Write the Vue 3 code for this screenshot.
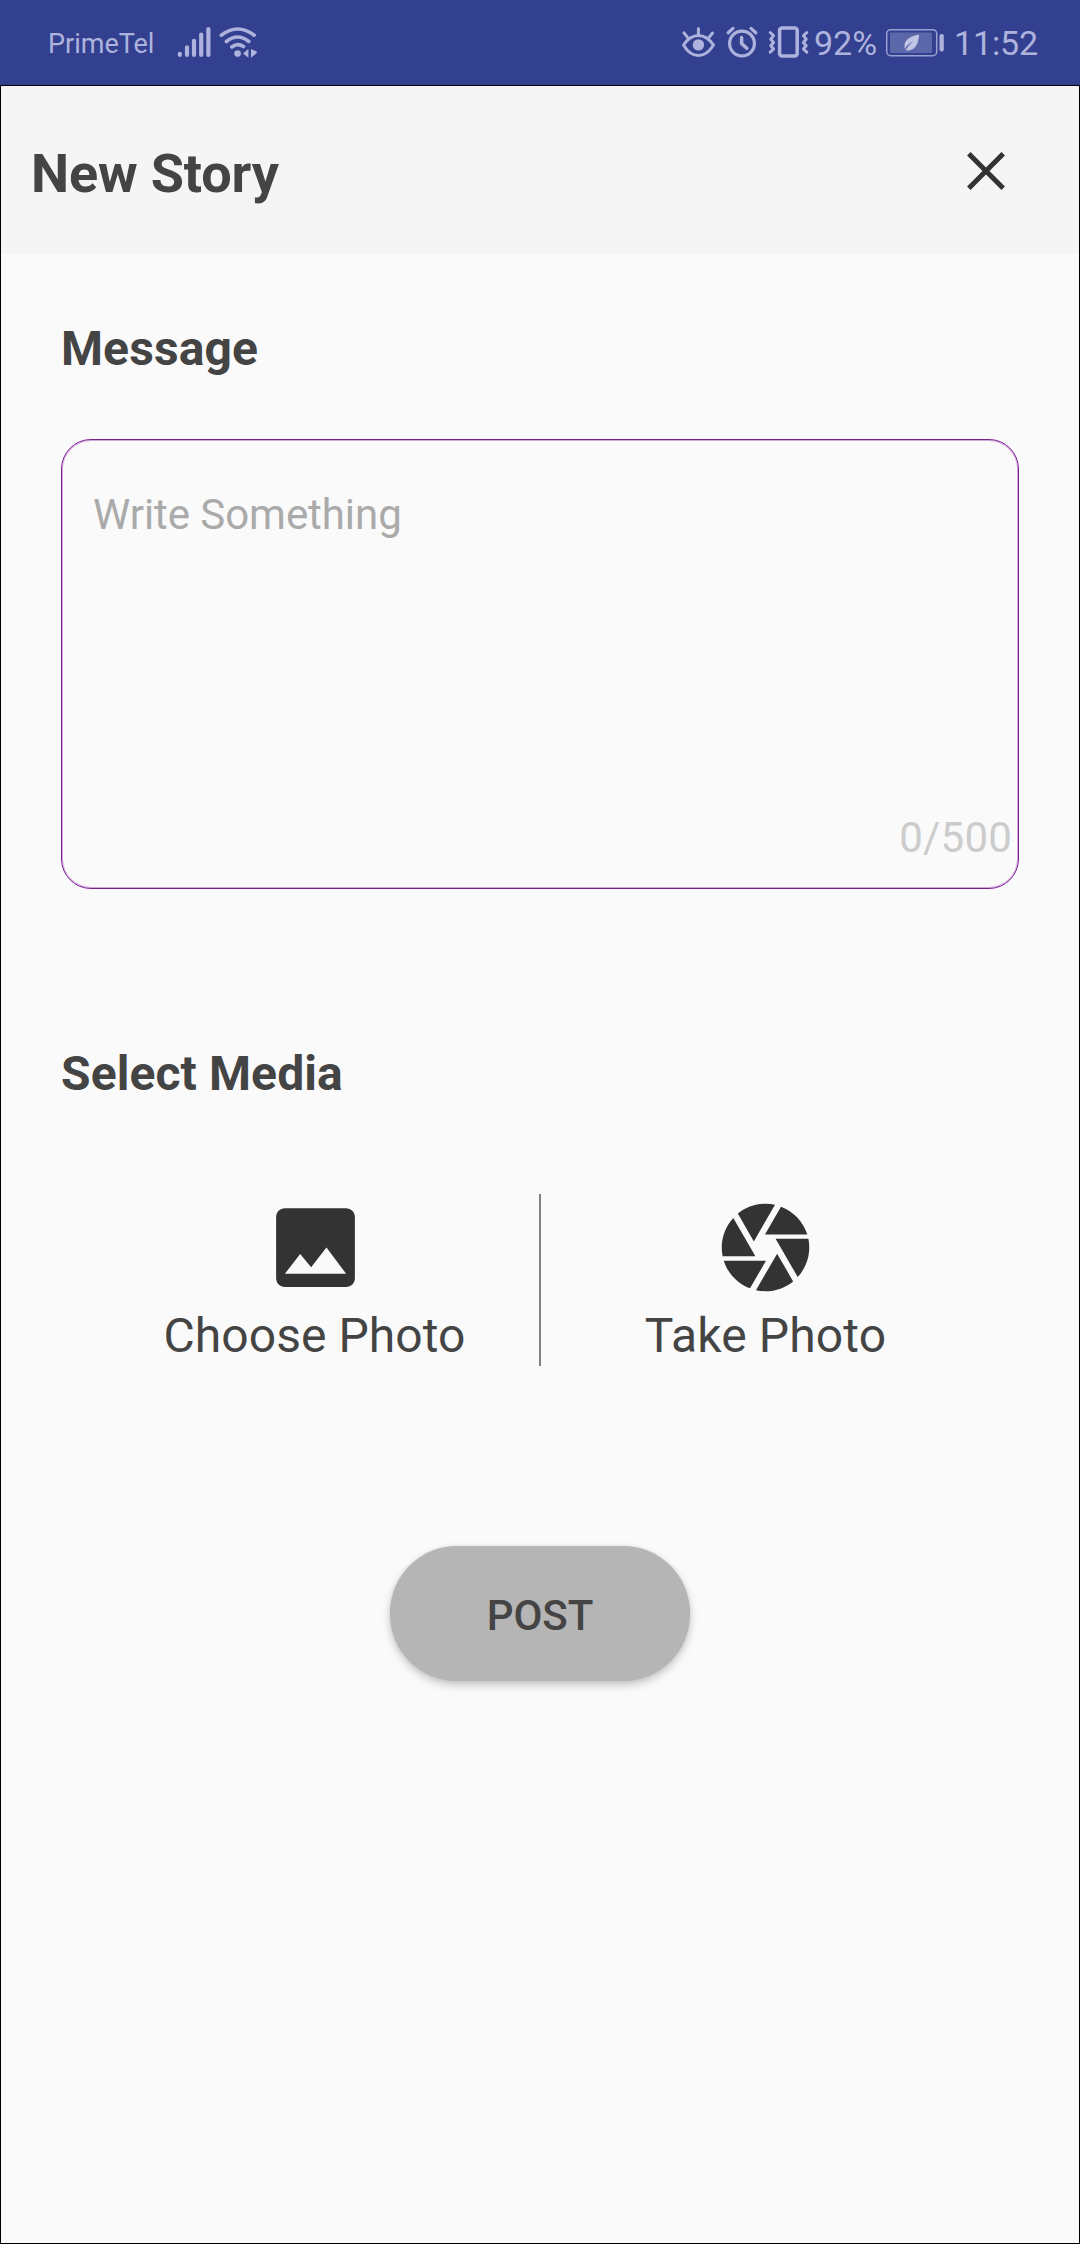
<script setup>
import { ref } from 'vue'

const message = ref('')
const limit = 500
</script>

<template>
  <div class="screen">
    <div class="status">
      <span class="carrier">PrimeTel</span>
      <svg class="signal" width="34" height="34" viewBox="177 25 34 34" fill="none" stroke="#adb3dc" stroke-width="4.2" stroke-linecap="round">
        <path d="M179.8 53.8v1.2M187 47.4V55M194 40.8V55M201.2 34.6V55M208.4 29V55" />
      </svg>
      <svg class="wifi" width="40" height="34" viewBox="218 25 40 34" fill="none" stroke="#adb3dc" stroke-width="3.6" stroke-linecap="round">
        <path d="M221.3 35.2Q237.6 22.8 254.2 35.2M226.4 41.5Q237.5 32.5 248.8 41.5M231.8 47Q237.5 42.5 243.5 46.5" />
        <circle cx="237.6" cy="53.6" r="3.3" fill="#adb3dc" stroke="none" />
        <path d="M243 53.5L248.4 49V57.7ZM251 49L256.8 51.5V53L251 57.7Z" fill="#adb3dc" stroke="none" />
      </svg>
      <span class="spacer"></span>
      <svg class="eye" width="36" height="34" viewBox="681 25 36 34" fill="none" stroke="#adb3dc" stroke-width="3" stroke-linecap="round">
        <path d="M683.5 45Q690 35.5 698.4 35.5T713.5 45Q707 55.5 698.4 55.5T683.5 45Z" stroke-linejoin="round" />
        <circle cx="698.4" cy="44.9" r="5.7" fill="#adb3dc" stroke="none" />
        <path d="M698.4 28.5V34M684 32.8L687.7 37.6M712.5 33L708.9 37.6" />
      </svg>
      <svg class="alarm" width="34" height="34" viewBox="725 25 34 34" fill="none" stroke="#adb3dc" stroke-width="3.2" stroke-linecap="round">
        <circle cx="742" cy="43.5" r="12.4" />
        <path d="M741.6 37.5V43.5L746.8 48.3" stroke-width="3.5" stroke-linejoin="round" />
        <path d="M728.2 32.8L733 28.4M755.8 32.8L751 28.4" />
      </svg>
      <svg class="vibrate" width="42" height="34" viewBox="768 25 42 34" fill="none" stroke="#adb3dc" stroke-linecap="round" stroke-linejoin="round">
        <rect x="779.6" y="27.9" width="17.6" height="28.2" rx="2.5" stroke-width="3.5" />
        <path d="M770.2 32.5L773.6 35.6L770.8 39.2L773.6 42.5L770.8 45.8L773.6 49L770.2 52.2M806.8 32.5L803.4 35.6L806.2 39.2L803.4 42.5L806.2 45.8L803.4 49L806.8 52.2" stroke-width="3" />
      </svg>
      <span class="pct">92%</span>
      <svg class="battery" width="60" height="34" viewBox="885 25 60 34">
        <rect x="886.7" y="29.7" width="50" height="26" rx="4" fill="none" stroke="#9aa1d2" stroke-width="1.5" />
        <rect x="890" y="32.5" width="42" height="20.5" rx="1" fill="#5c67a9" />
        <rect x="939.5" y="34" width="4.3" height="17.5" rx="2" fill="#adb3dc" />
        <path d="M919 34.5C907 36.5 903 42 905 49.5C905 47 909 43.5 913.5 41C909.5 44.5 907 47.5 905.5 50.5C914.5 51.5 918.5 45 919 34.5Z" fill="#c0c5e4" />
      </svg>
      <span class="time">11:52</span>
    </div>

    <div class="page">
      <header class="head">
        <h1>New Story</h1>
        <svg class="close" width="40" height="40" viewBox="0 0 40 40" stroke="#333" stroke-width="5">
          <path d="M2.8 2.8L37.2 37.2M37.2 2.8L2.8 37.2" />
        </svg>
      </header>

      <main class="body">
        <h2>Message</h2>
        <div class="box">
          <span class="hint">Write Something</span>
          <span class="count">{{ message.length }}/{{ limit }}</span>
        </div>

        <h2 class="media-title">Select Media</h2>
        <div class="media">
          <div class="option">
            <svg class="gallery" width="105" height="105" viewBox="0 0 24 24" fill="#333">
              <path d="M21 19V5c0-1.1-.9-2-2-2H5c-1.1 0-2 .9-2 2v14c0 1.1.9 2 2 2h14c1.1 0 2-.9 2-2zM8.5 13.5l2.5 3.01L14.5 12l4.5 6H5l3.5-4.5z" />
            </svg>
            <span class="choose">Choose Photo</span>
          </div>
          <div class="rule"></div>
          <div class="option">
            <svg width="105" height="105" viewBox="0 0 24 24" fill="#333">
              <path d="M9.4 10.5l4.77-8.26C13.47 2.09 12.75 2 12 2c-2.4 0-4.6.85-6.32 2.25l3.66 6.35.06-.1zM21.54 9c-.92-2.92-3.15-5.26-6-6.34L11.88 9h9.66zm.26 1h-7.49l.29.5 4.76 8.25C21 16.97 22 14.61 22 12c0-.69-.07-1.35-.2-2zM8.54 12l-3.9-6.75C3.01 7.03 2 9.39 2 12c0 .69.07 1.35.2 2h7.49l-1.15-2zm-6.08 3c.92 2.92 3.15 5.26 6 6.34L12.12 15H2.46zm11.27 0l-3.9 6.76c.7.15 1.42.24 2.17.24 2.4 0 4.6-.85 6.32-2.25l-3.66-6.35-.93 1.6z" />
            </svg>
            <span class="take">Take Photo</span>
          </div>
        </div>

        <button class="post" type="button">POST</button>
      </main>
    </div>
  </div>
</template>

<style>
body {
  margin: 0;
}
</style>

<style scoped>
.screen {
  width: 1080px;
  height: 2244px;
  display: flex;
  flex-direction: column;
  font-family: Roboto, sans-serif;
  color: #444;
  background: #fafafa;
  overflow: hidden;
}
.status {
  flex: none;
  box-sizing: border-box;
  height: 85px;
  padding: 0 42px 0 48px;
  display: flex;
  align-items: center;
  background: #334090;
  color: #adb3dc;
  white-space: nowrap;
}
.status svg {
  flex: none;
  display: block;
  margin-top: -1px;
}
.carrier {
  width: 129px;
  font-size: 27px;
  line-height: 32px;
  padding-top: 2px;
}
.wifi {
  margin-left: 7px;
}
.spacer {
  flex: 1;
}
.alarm {
  margin-left: 8px;
}
.vibrate {
  margin-left: 9px;
}
.pct {
  width: 71px;
  margin-left: 4px;
  font-size: 34px;
  line-height: 40px;
  padding-top: 1px;
}
.time {
  width: 84px;
  margin-left: 9px;
  font-size: 34px;
  line-height: 40px;
  letter-spacing: -0.15px;
  padding-top: 1px;
}
.page {
  flex: 1;
  border: 1px solid #000;
}
.head {
  box-sizing: border-box;
  height: 168px;
  padding: 0 73px 1px 30px;
  display: flex;
  align-items: center;
  justify-content: space-between;
  background: #f5f5f5;
}
h1,
h2 {
  margin: 0;
  font-weight: 700;
}
h1 {
  font-size: 54px;
  line-height: 64px;
  letter-spacing: -0.15px;
  padding-top: 8px;
}
.close {
  display: block;
  margin-top: 2px;
}
.body {
  padding: 67px 60px 0;
  display: flex;
  flex-direction: column;
}
h2 {
  font-size: 48px;
  line-height: 56px;
  letter-spacing: 0.1px;
}
.box {
  box-sizing: border-box;
  height: 450px;
  margin-top: 62px;
  padding: 47px 6px 22px 31px;
  display: flex;
  flex-direction: column;
  justify-content: space-between;
  border: 1px solid #7b1f90;
  border-radius: 30px;
  box-shadow: inset 0 0 0 1px #d3a8da;
  font-size: 42px;
  line-height: 56px;
}
.hint {
  color: #aaa;
  letter-spacing: -0.06px;
}
.count {
  align-self: flex-end;
  color: #ccc;
  letter-spacing: 0.2px;
}
.media-title {
  margin-top: 157px;
}
.media {
  margin: 92px 29px 0;
  height: 172px;
  display: flex;
}
.option {
  flex: 1;
  display: flex;
  flex-direction: column;
  align-items: center;
  padding-top: 1px;
  font-size: 48px;
  line-height: 56px;
}
.option svg {
  display: block;
  margin-bottom: 8px;
}
.option .gallery {
  margin-left: 2px;
}
.choose {
  letter-spacing: 0.07px;
}
.take {
  letter-spacing: 0.15px;
}
.rule {
  width: 2px;
  background: #808080;
}
.post {
  align-self: center;
  width: 300px;
  height: 135px;
  margin-top: 180px;
  padding: 4px 0 0;
  border: 0;
  border-radius: 67px;
  background: #b5b5b5;
  box-shadow: 0 4px 8px rgba(0, 0, 0, 0.22), 0 0 3px rgba(0, 0, 0, 0.08);
  font: 500 42px/50px Roboto, sans-serif;
  letter-spacing: -0.1px;
  color: #444;
}
</style>
